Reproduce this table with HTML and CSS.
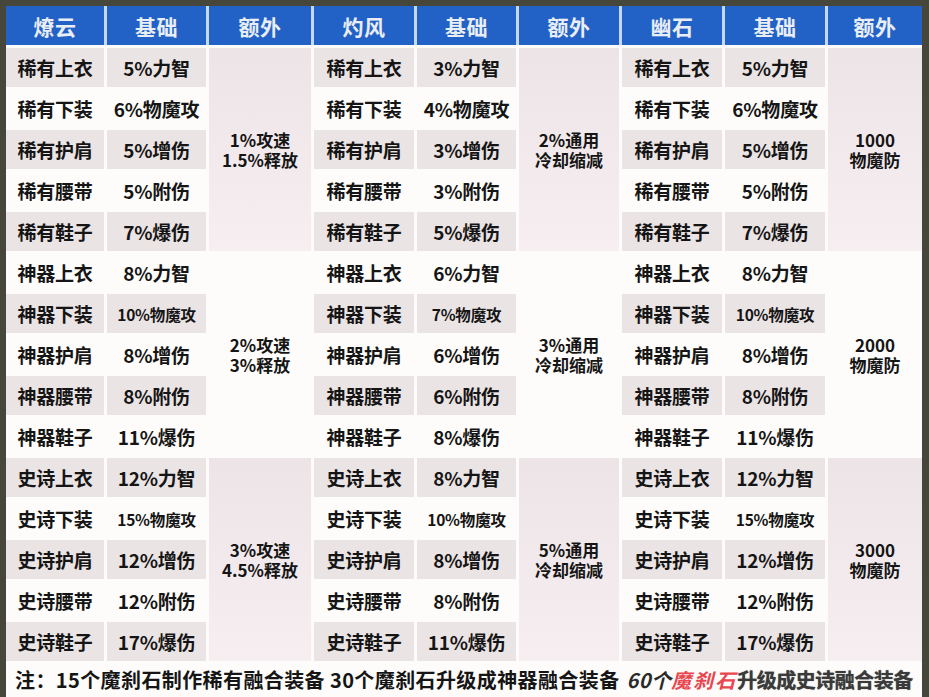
FILE: index.html
```html
<!DOCTYPE html>
<html lang="zh">
<head>
<meta charset="utf-8">
<title>融合装备属性表</title>
<link rel="stylesheet" href="styles.css">
</head>
<body>
<div class="sheet">
  <div class="head">
    <div class="hc">燎云</div><div class="hc">基础</div><div class="hc">额外</div>
    <div class="hc">灼风</div><div class="hc">基础</div><div class="hc">额外</div>
    <div class="hc">幽石</div><div class="hc">基础</div><div class="hc">额外</div>
  </div>
  <div class="grid">
    <!-- row 1 -->
    <div class="c s">稀有上衣</div><div class="c s">5%力智</div>
    <div class="x p"><span class="ln">1%攻速</span><span class="ln">1.5%释放</span></div>
    <div class="c s">稀有上衣</div><div class="c s">3%力智</div>
    <div class="x p"><span class="ln">2%通用</span><span class="ln">冷却缩减</span></div>
    <div class="c s">稀有上衣</div><div class="c s">5%力智</div>
    <div class="x p"><span class="ln">1000</span><span class="ln">物魔防</span></div>
    <!-- row 2 -->
    <div class="c">稀有下装</div><div class="c">6%物魔攻</div>
    <div class="c">稀有下装</div><div class="c">4%物魔攻</div>
    <div class="c">稀有下装</div><div class="c">6%物魔攻</div>
    <!-- row 3 -->
    <div class="c s">稀有护肩</div><div class="c s">5%增伤</div>
    <div class="c s">稀有护肩</div><div class="c s">3%增伤</div>
    <div class="c s">稀有护肩</div><div class="c s">5%增伤</div>
    <!-- row 4 -->
    <div class="c">稀有腰带</div><div class="c">5%附伤</div>
    <div class="c">稀有腰带</div><div class="c">3%附伤</div>
    <div class="c">稀有腰带</div><div class="c">5%附伤</div>
    <!-- row 5 -->
    <div class="c s">稀有鞋子</div><div class="c s">7%爆伤</div>
    <div class="c s">稀有鞋子</div><div class="c s">5%爆伤</div>
    <div class="c s">稀有鞋子</div><div class="c s">7%爆伤</div>
    <!-- row 6 -->
    <div class="c">神器上衣</div><div class="c">8%力智</div>
    <div class="x"><span class="ln">2%攻速</span><span class="ln">3%释放</span></div>
    <div class="c">神器上衣</div><div class="c">6%力智</div>
    <div class="x"><span class="ln">3%通用</span><span class="ln">冷却缩减</span></div>
    <div class="c">神器上衣</div><div class="c">8%力智</div>
    <div class="x"><span class="ln">2000</span><span class="ln">物魔防</span></div>
    <!-- row 7 -->
    <div class="c s">神器下装</div><div class="c s sm">10%物魔攻</div>
    <div class="c s">神器下装</div><div class="c s sm">7%物魔攻</div>
    <div class="c s">神器下装</div><div class="c s sm">10%物魔攻</div>
    <!-- row 8 -->
    <div class="c">神器护肩</div><div class="c">8%增伤</div>
    <div class="c">神器护肩</div><div class="c">6%增伤</div>
    <div class="c">神器护肩</div><div class="c">8%增伤</div>
    <!-- row 9 -->
    <div class="c s">神器腰带</div><div class="c s">8%附伤</div>
    <div class="c s">神器腰带</div><div class="c s">6%附伤</div>
    <div class="c s">神器腰带</div><div class="c s">8%附伤</div>
    <!-- row 10 -->
    <div class="c">神器鞋子</div><div class="c">11%爆伤</div>
    <div class="c">神器鞋子</div><div class="c">8%爆伤</div>
    <div class="c">神器鞋子</div><div class="c">11%爆伤</div>
    <!-- row 11 -->
    <div class="c s">史诗上衣</div><div class="c s">12%力智</div>
    <div class="x p"><span class="ln">3%攻速</span><span class="ln">4.5%释放</span></div>
    <div class="c s">史诗上衣</div><div class="c s">8%力智</div>
    <div class="x p"><span class="ln">5%通用</span><span class="ln">冷却缩减</span></div>
    <div class="c s">史诗上衣</div><div class="c s">12%力智</div>
    <div class="x p"><span class="ln">3000</span><span class="ln">物魔防</span></div>
    <!-- row 12 -->
    <div class="c">史诗下装</div><div class="c sm">15%物魔攻</div>
    <div class="c">史诗下装</div><div class="c sm">10%物魔攻</div>
    <div class="c">史诗下装</div><div class="c sm">15%物魔攻</div>
    <!-- row 13 -->
    <div class="c s">史诗护肩</div><div class="c s">12%增伤</div>
    <div class="c s">史诗护肩</div><div class="c s">8%增伤</div>
    <div class="c s">史诗护肩</div><div class="c s">12%增伤</div>
    <!-- row 14 -->
    <div class="c">史诗腰带</div><div class="c">12%附伤</div>
    <div class="c">史诗腰带</div><div class="c">8%附伤</div>
    <div class="c">史诗腰带</div><div class="c">12%附伤</div>
    <!-- row 15 -->
    <div class="c s">史诗鞋子</div><div class="c s">17%爆伤</div>
    <div class="c s">史诗鞋子</div><div class="c s">11%爆伤</div>
    <div class="c s">史诗鞋子</div><div class="c s">17%爆伤</div>
  </div>
  <div class="note">注：15个魔刹石制作稀有融合装备 30个魔刹石升级成神器融合装备<span class="fade">60个</span><span class="mark">魔刹石</span><span class="blur">升级成史诗融合装备</span></div>
</div>
</body>
</html>
```
FILE: styles.css
```css
html, body {
  margin: 0;
  padding: 0;
}
body {
  background: #47463a;
  width: 929px;
  height: 697px;
  overflow: hidden;
  padding: 6px 0 0 6px;
  box-sizing: border-box;
  font-family: "Noto Sans CJK SC", "Noto Sans", sans-serif;
}
.sheet {
  width: 916px;
  height: 691px;
  background: #fdfcfa;
  display: flex;
  flex-direction: column;
}
.head {
  display: grid;
  grid-template-columns: 98px 99px 102px 100px 99px 100px 100px 100px 94px;
  column-gap: 3px;
  height: 39px;
  background: #c6d7f2;
}
.hc {
  background: #2262c6;
  color: #e9edf5;
  font-weight: 700;
  font-size: 21px;
  display: flex;
  align-items: center;
  justify-content: center;
  letter-spacing: 0.5px;
}
.grid {
  display: grid;
  grid-template-columns: 98px 99px 102px 100px 99px 100px 100px 100px 94px;
  grid-auto-rows: 39px;
  column-gap: 3px;
  row-gap: 2px;
  padding-top: 3px;
  background: #fdfcfa;
}
.c {
  display: flex;
  align-items: center;
  justify-content: center;
  font-weight: 700;
  font-size: 19px;
  color: #151515;
  background: #fdfcfa;
  letter-spacing: -0.2px;
}
.c.s {
  background: #ebe4e5;
}
.c.sm {
  font-size: 15.5px;
}
.x {
  grid-row: span 5;
  display: flex;
  flex-direction: column;
  align-items: center;
  justify-content: center;
  font-weight: 700;
  font-size: 17px;
  color: #151515;
  background: #fdfcfa;
}
.ln {
  display: block;
  height: 20px;
  line-height: 20px;
}
.x.p {
  background: linear-gradient(#ece4e6, #f6eef1);
}
.note {
  flex: 1;
  display: flex;
  align-items: center;
  padding-left: 9px;
  font-weight: 700;
  font-size: 20px;
  letter-spacing: 0.4px;
  color: #151515;
  white-space: nowrap;
  overflow: hidden;
}
.fade {
  font-style: italic;
  color: #2a2a2a;
  margin-left: 7px;
}
.mark {
  color: #e9464f;
  font-style: italic;
  letter-spacing: 2px;
}
.blur {
  color: #3a3a3a;
  text-shadow: 0 0 1px #555;
  letter-spacing: -0.5px;
}
```
